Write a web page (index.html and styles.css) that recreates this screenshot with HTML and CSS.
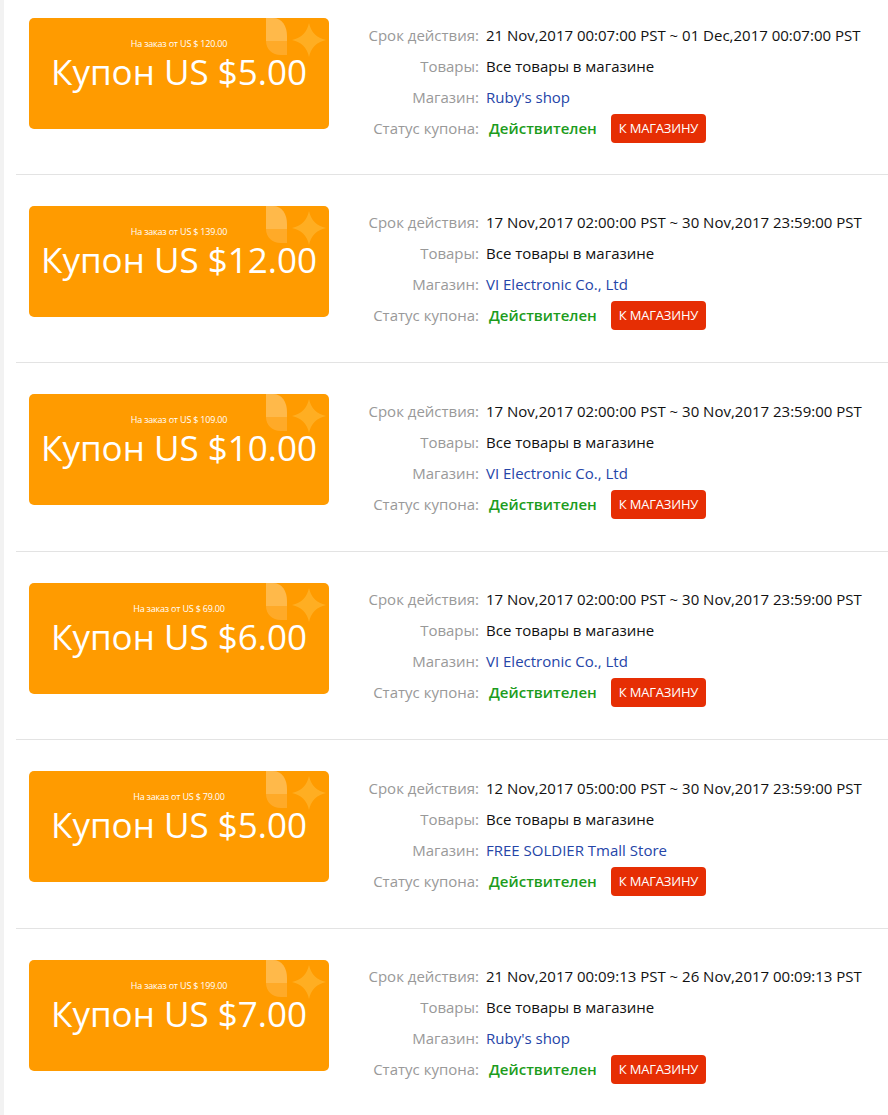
FILE: index.html
```html
<!DOCTYPE html>
<html lang="ru">
<head>
    <meta charset="UTF-8">
    <meta name="viewport" content="width=device-width, initial-scale=1.0">
    <title>Мои купоны</title>
    <link rel="stylesheet" href="styles.css">
</head>
<body>

<div class="page">
    <div class="coupon-list">

        <div class="coupon-row">
            <div class="coupon-card">
                <svg class="deco" width="92" height="50" viewBox="0 0 92 50"><path class="leaf-top" d="M29 0H36C45 0 50 8 50 18V23H29Z"/><path class="leaf-bottom" d="M29 23H50V37H44C35 37 29 31 29 23Z"/><path class="star" d="M72 5Q75 19 89 22Q75 25 72 39Q69 25 55 22Q69 19 72 5Z"/></svg>
                <div class="min-order">На заказ от US $ 120.00</div>
                <div class="amount">Купон US $5.00</div>
            </div>
            <div class="coupon-info">
                <span class="label">Срок действия:</span><span class="value">21 Nov,2017 00:07:00 PST ~ 01 Dec,2017 00:07:00 PST</span>
                <span class="label">Товары:</span><span class="value">Все товары в магазине</span>
                <span class="label">Магазин:</span><a class="value shop" href="#">Ruby's shop</a>
                <span class="label">Статус купона:</span><span class="value status"><b>Действителен</b><a class="store-btn" href="#">К МАГАЗИНУ</a></span>
            </div>
        </div>

        <div class="coupon-row">
            <div class="coupon-card">
                <svg class="deco" width="92" height="50" viewBox="0 0 92 50"><path class="leaf-top" d="M29 0H36C45 0 50 8 50 18V23H29Z"/><path class="leaf-bottom" d="M29 23H50V37H44C35 37 29 31 29 23Z"/><path class="star" d="M72 5Q75 19 89 22Q75 25 72 39Q69 25 55 22Q69 19 72 5Z"/></svg>
                <div class="min-order">На заказ от US $ 139.00</div>
                <div class="amount">Купон US $12.00</div>
            </div>
            <div class="coupon-info">
                <span class="label">Срок действия:</span><span class="value">17 Nov,2017 02:00:00 PST ~ 30 Nov,2017 23:59:00 PST</span>
                <span class="label">Товары:</span><span class="value">Все товары в магазине</span>
                <span class="label">Магазин:</span><a class="value shop" href="#">VI Electronic Co., Ltd</a>
                <span class="label">Статус купона:</span><span class="value status"><b>Действителен</b><a class="store-btn" href="#">К МАГАЗИНУ</a></span>
            </div>
        </div>

        <div class="coupon-row">
            <div class="coupon-card">
                <svg class="deco" width="92" height="50" viewBox="0 0 92 50"><path class="leaf-top" d="M29 0H36C45 0 50 8 50 18V23H29Z"/><path class="leaf-bottom" d="M29 23H50V37H44C35 37 29 31 29 23Z"/><path class="star" d="M72 5Q75 19 89 22Q75 25 72 39Q69 25 55 22Q69 19 72 5Z"/></svg>
                <div class="min-order">На заказ от US $ 109.00</div>
                <div class="amount">Купон US $10.00</div>
            </div>
            <div class="coupon-info">
                <span class="label">Срок действия:</span><span class="value">17 Nov,2017 02:00:00 PST ~ 30 Nov,2017 23:59:00 PST</span>
                <span class="label">Товары:</span><span class="value">Все товары в магазине</span>
                <span class="label">Магазин:</span><a class="value shop" href="#">VI Electronic Co., Ltd</a>
                <span class="label">Статус купона:</span><span class="value status"><b>Действителен</b><a class="store-btn" href="#">К МАГАЗИНУ</a></span>
            </div>
        </div>

        <div class="coupon-row">
            <div class="coupon-card">
                <svg class="deco" width="92" height="50" viewBox="0 0 92 50"><path class="leaf-top" d="M29 0H36C45 0 50 8 50 18V23H29Z"/><path class="leaf-bottom" d="M29 23H50V37H44C35 37 29 31 29 23Z"/><path class="star" d="M72 5Q75 19 89 22Q75 25 72 39Q69 25 55 22Q69 19 72 5Z"/></svg>
                <div class="min-order">На заказ от US $ 69.00</div>
                <div class="amount">Купон US $6.00</div>
            </div>
            <div class="coupon-info">
                <span class="label">Срок действия:</span><span class="value">17 Nov,2017 02:00:00 PST ~ 30 Nov,2017 23:59:00 PST</span>
                <span class="label">Товары:</span><span class="value">Все товары в магазине</span>
                <span class="label">Магазин:</span><a class="value shop" href="#">VI Electronic Co., Ltd</a>
                <span class="label">Статус купона:</span><span class="value status"><b>Действителен</b><a class="store-btn" href="#">К МАГАЗИНУ</a></span>
            </div>
        </div>

        <div class="coupon-row">
            <div class="coupon-card">
                <svg class="deco" width="92" height="50" viewBox="0 0 92 50"><path class="leaf-top" d="M29 0H36C45 0 50 8 50 18V23H29Z"/><path class="leaf-bottom" d="M29 23H50V37H44C35 37 29 31 29 23Z"/><path class="star" d="M72 5Q75 19 89 22Q75 25 72 39Q69 25 55 22Q69 19 72 5Z"/></svg>
                <div class="min-order">На заказ от US $ 79.00</div>
                <div class="amount">Купон US $5.00</div>
            </div>
            <div class="coupon-info">
                <span class="label">Срок действия:</span><span class="value">12 Nov,2017 05:00:00 PST ~ 30 Nov,2017 23:59:00 PST</span>
                <span class="label">Товары:</span><span class="value">Все товары в магазине</span>
                <span class="label">Магазин:</span><a class="value shop" href="#">FREE SOLDIER Tmall Store</a>
                <span class="label">Статус купона:</span><span class="value status"><b>Действителен</b><a class="store-btn" href="#">К МАГАЗИНУ</a></span>
            </div>
        </div>

        <div class="coupon-row">
            <div class="coupon-card">
                <svg class="deco" width="92" height="50" viewBox="0 0 92 50"><path class="leaf-top" d="M29 0H36C45 0 50 8 50 18V23H29Z"/><path class="leaf-bottom" d="M29 23H50V37H44C35 37 29 31 29 23Z"/><path class="star" d="M72 5Q75 19 89 22Q75 25 72 39Q69 25 55 22Q69 19 72 5Z"/></svg>
                <div class="min-order">На заказ от US $ 199.00</div>
                <div class="amount">Купон US $7.00</div>
            </div>
            <div class="coupon-info">
                <span class="label">Срок действия:</span><span class="value">21 Nov,2017 00:09:13 PST ~ 26 Nov,2017 00:09:13 PST</span>
                <span class="label">Товары:</span><span class="value">Все товары в магазине</span>
                <span class="label">Магазин:</span><a class="value shop" href="#">Ruby's shop</a>
                <span class="label">Статус купона:</span><span class="value status"><b>Действителен</b><a class="store-btn" href="#">К МАГАЗИНУ</a></span>
            </div>
        </div>

    </div>
</div>

</body>
</html>
```

FILE: styles.css
```css
body {
    margin: 0;
    padding: 0;
    font-family: "Open Sans", "Noto Sans", Arial, sans-serif;
    background-color: #fff;
    color: #111;
}

.page {
    border-left: 4px solid #f2f2f2;
    min-height: 1115px;
    box-sizing: border-box;
}

.coupon-list {
    margin-left: 12px;
}

.coupon-row {
    display: flex;
    align-items: flex-start;
    padding: 31px 0 31px 13px;
    border-bottom: 1px solid #e3e3e3;
}

.coupon-row:first-child {
    padding-top: 18px;
    padding-bottom: 30px;
}

.coupon-row:last-child {
    border-bottom: none;
}

/* оранжевая карточка купона */
.coupon-card {
    position: relative;
    flex: none;
    width: 300px;
    height: 111px;
    padding-top: 20px;
    box-sizing: border-box;
    background-color: #ff9b00;
    border-radius: 5px;
    overflow: hidden;
    color: #fff;
    text-align: center;
}

.deco {
    position: absolute;
    top: 0;
    right: 0;
}

.leaf-top {
    fill: #ffb94a;
}

.leaf-bottom {
    fill: #ffaa28;
}

.star {
    fill: #ffae22;
}

.min-order {
    position: relative;
    font-size: 9px;
    line-height: 12px;
    letter-spacing: -0.2px;
}

.amount {
    position: relative;
    margin-top: 2px;
    font-size: 35px;
    line-height: 40px;
    white-space: nowrap;
}

/* информация справа */
.coupon-info {
    display: grid;
    grid-template-columns: 130px auto;
    column-gap: 7px;
    margin: 1.5px 0 0 20px;
    font-size: 15px;
    line-height: 31px;
}

.label {
    text-align: right;
    color: #999;
    white-space: nowrap;
}

.value {
    color: #111;
    white-space: nowrap;
}

.shop {
    color: #2545a8;
    text-decoration: none;
}

.status {
    display: flex;
    align-items: center;
    height: 31px;
    padding-left: 3px;
}

.status b {
    color: #1c9c1c;
    font-weight: 600;
}

.store-btn {
    display: inline-block;
    margin-left: 14px;
    padding: 0 8px;
    height: 29px;
    line-height: 29px;
    font-size: 13px;
    letter-spacing: -0.2px;
    color: #fff;
    background-color: #e62e04;
    border-radius: 4px;
    text-decoration: none;
}
```
